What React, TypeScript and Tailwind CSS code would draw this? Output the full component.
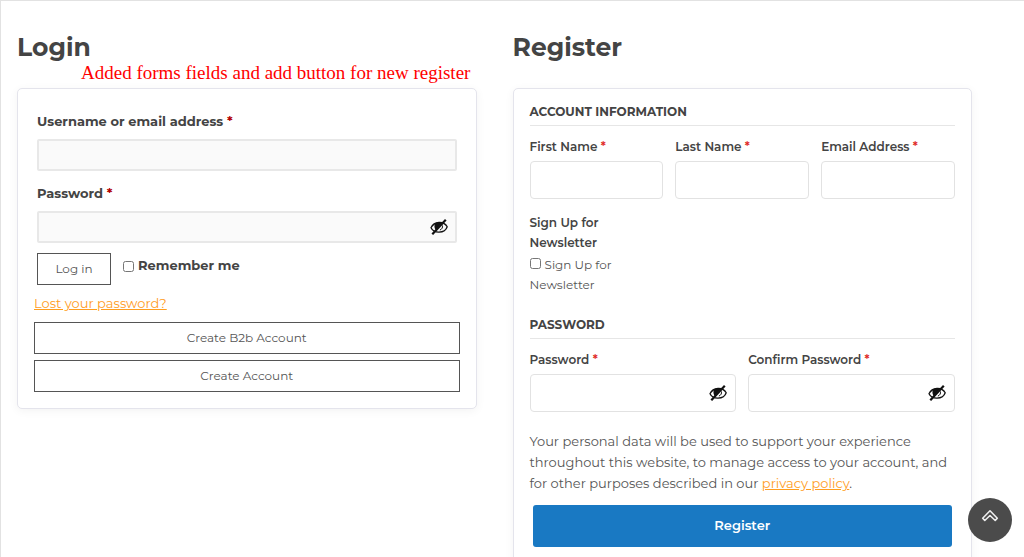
import { useState, type ComponentProps, type ReactNode } from "react";
import { clsx } from "clsx";

const OUTLINE_BUTTON_CLASS =
  "h-8 border border-[#555] bg-white text-xs text-[#555] hover:bg-gray-50";

const LINK_CLASS = "text-[#ff9d1e] underline";

function EyeSlashIcon() {
  return (
    <svg viewBox="0 0 18 16" className="h-4 w-[18px]" fill="none" aria-hidden="true">
      <path
        d="M1 8.800C2.600 5.300 5.400 3.700 9 3.500c3.700-.2 6.500 1.200 8.200 4.200-1.100 3.500-4.100 5.300-8.200 5.500-3.800.1-6.500-1.400-8-4.400Z"
        stroke="#111"
        strokeWidth="1.300"
      />
      <path d="M5.100 4.400c1.800-1 4.800-1.300 7-.8L6 11.300C4.300 9.500 3.900 6.300 5.100 4.400Z" fill="#111" />
      <path d="M12.400 6.400c.5 2-.4 3.800-2.500 4.700" stroke="#111" strokeWidth="1" />
      <path d="M2.300 15.200 15.800.8" stroke="#111" strokeWidth="2.200" />
    </svg>
  );
}

type FieldProps = ComponentProps<"input"> & {
  id: string;
  label: string;
  variant?: "login" | "register";
};

function Field({ id, label, type = "text", variant = "register", ...props }: FieldProps) {
  const [visible, setVisible] = useState(false);
  const isPassword = type === "password";
  const isLogin = variant === "login";

  return (
    <div className="min-w-0">
      <label
        htmlFor={id}
        className={clsx(
          "block leading-5 text-[#444]",
          isLogin ? "mb-2 text-[13px] font-bold" : "mb-1 text-xs font-semibold",
        )}
      >
        {label} <span className={isLogin ? "text-[#b30000]" : "text-[#e02b27]"}>*</span>
      </label>
      <div className="relative">
        <input
          id={id}
          type={isPassword && visible ? "text" : type}
          className={clsx(
            "block w-full px-3 text-[13px] text-[#444] outline-none focus:border-gray-400",
            isLogin
              ? "h-8 rounded-xs border-2 border-[#e8e8e8] bg-[#fafafa]"
              : "h-[38px] rounded border border-[#e2e2e2] bg-white",
            isPassword && "pr-9",
          )}
          {...props}
        />
        {isPassword ? (
          <button
            type="button"
            aria-label={visible ? "Hide password" : "Show password"}
            className="absolute inset-y-0 right-2 flex w-5 items-center justify-center"
            onClick={() => setVisible(!visible)}
          >
            <EyeSlashIcon />
          </button>
        ) : null}
      </div>
    </div>
  );
}

function Panel({ children }: { children: ReactNode }) {
  return (
    <div className="rounded-[5px] border border-[#e4e4ec] bg-white px-4 shadow-[0_2px_10px_rgba(0,0,0,0.05)]">
      {children}
    </div>
  );
}

function SectionTitle({ children }: { children: ReactNode }) {
  return (
    <h3 className="mb-[11px] border-b border-[#e6e6e6] pb-[3px] text-xs leading-5 font-bold text-[#444] uppercase">
      {children}
    </h3>
  );
}

function LoginColumn() {
  return (
    <section className="min-w-0">
      <h2 className="text-[25px] leading-8 font-bold text-[#444]">Login</h2>
      <p className="mb-[5px] ml-16 font-['Liberation_Serif',serif] text-[19px] leading-5 whitespace-nowrap text-[#ff0000]">
        Added forms fields and add button for new register
      </p>
      <Panel>
        <div className="pt-[22px] pb-4">
          <form className="px-[3px]" onSubmit={(e) => e.preventDefault()}>
            <div className="flex flex-col gap-3">
              <Field id="username" label="Username or email address" variant="login" />
              <Field id="login-password" label="Password" type="password" variant="login" />
            </div>
            <div className="mt-[10px] flex gap-3">
              <button type="submit" className={clsx(OUTLINE_BUTTON_CLASS, "w-[74px]")}>
                Log in
              </button>
              <label className="flex h-[26px] items-center gap-1 text-[13px] font-bold text-[#444]">
                <input type="checkbox" className="size-[11px]" />
                Remember me
              </label>
            </div>
          </form>
          <a
            href="#lost-password"
            className={clsx(LINK_CLASS, "mt-2 block w-fit text-[13px] leading-5")}
          >
            Lost your password?
          </a>
          <div className="mt-[9px] flex flex-col gap-[6px]">
            <button type="button" className={OUTLINE_BUTTON_CLASS}>
              Create B2b Account
            </button>
            <button type="button" className={OUTLINE_BUTTON_CLASS}>
              Create Account
            </button>
          </div>
        </div>
      </Panel>
    </section>
  );
}

function RegisterColumn() {
  return (
    <section className="min-w-0">
      <h2 className="mb-[25px] text-[25px] leading-8 font-bold text-[#444]">Register</h2>
      <Panel>
        <form className="pt-[13px] pb-6" onSubmit={(e) => e.preventDefault()}>
          <SectionTitle>Account information</SectionTitle>
          <div className="grid grid-cols-3 gap-x-3 gap-y-[14px]">
            <Field id="first-name" label="First Name" />
            <Field id="last-name" label="Last Name" />
            <Field id="email" label="Email Address" type="email" />
            <div className="text-xs leading-5">
              <p className="w-24 font-semibold text-[#444]">Sign Up for Newsletter</p>
              <label className="mt-[2px] block w-24 text-[#555]">
                <input type="checkbox" className="mr-1 size-[11px]" />
                Sign Up for Newsletter
              </label>
            </div>
          </div>
          <div className="mt-5">
            <SectionTitle>Password</SectionTitle>
            <div className="grid grid-cols-2 gap-3">
              <Field id="password" label="Password" type="password" />
              <Field id="confirm-password" label="Confirm Password" type="password" />
            </div>
          </div>
          <p className="mt-[19px] text-[13px] leading-[21px] text-[#555]">
            Your personal data will be used to support your experience throughout this website, to
            manage access to your account, and for other purposes described in our{" "}
            <a href="#privacy" className={LINK_CLASS}>
              privacy policy
            </a>
            .
          </p>
          <div className="mt-[11px] px-[3px]">
            <button
              type="submit"
              className="h-[42px] w-full rounded-[3px] bg-[#1979c3] text-[13px] font-semibold text-white hover:bg-[#006bb4]"
            >
              Register
            </button>
          </div>
        </form>
      </Panel>
    </section>
  );
}

function BackToTop() {
  return (
    <button
      type="button"
      aria-label="Back to top"
      className="fixed right-3 bottom-[15px] flex size-11 items-center justify-center rounded-full bg-[#4b4b4b]"
      onClick={() => window.scrollTo({ top: 0, behavior: "smooth" })}
    >
      <svg viewBox="0 0 18 14" className="mb-2 h-[14px] w-[18px]" fill="none" aria-hidden="true">
        <path
          d="M9 1.800 16.300 9.200 14.200 11.500 9 6.500 3.800 11.500 1.700 9.200Z"
          stroke="#eee"
          strokeWidth="1.600"
          strokeLinejoin="round"
        />
      </svg>
    </button>
  );
}

export default function App() {
  return (
    <main className="min-h-screen border-t border-l border-[#e2e2e2] bg-white font-['Montserrat','Inter',sans-serif]">
      <div className="grid grid-cols-2 gap-9 pt-[30px] pr-[52px] pl-4">
        <LoginColumn />
        <RegisterColumn />
      </div>
      <BackToTop />
    </main>
  );
}
